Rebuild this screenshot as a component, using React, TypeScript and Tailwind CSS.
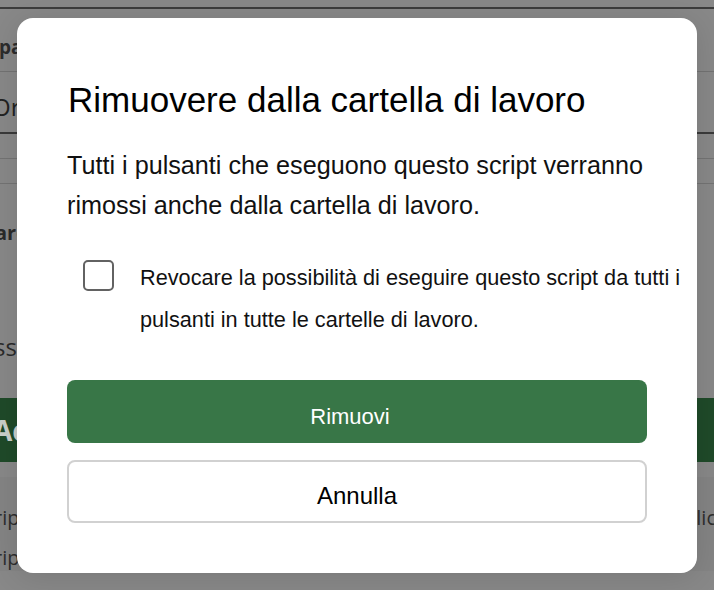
import React from 'react'

function PageBehind() {
  return (
    <div className="flex flex-col w-full font-['Open_Sans',sans-serif]">
      <div className="h-[7px]" />
      <div className="h-[2px] bg-[#3c3c3c]" />
      <div className="h-[62px] pt-[26px] pl-0 text-[19px] font-bold leading-[24px] text-[#2c2c2c] -ml-[1px]">pa</div>
      <div className="h-px bg-[#727272]" />
      <div className="h-[60px] pt-[20px] text-[24px] leading-[30px] text-[#222222] -ml-[8px]">Or</div>
      <div className="h-[2px] bg-[#3a3a3a]" />
      <div className="h-[24px]" />
      <div className="h-px bg-[#737373]" />
      <div className="h-[24px]" />
      <div className="h-px bg-[#737373]" />
      <div className="h-[214px] flex flex-col">
        <div className="mt-[36px] text-[20px] font-bold leading-[26px] text-[#2a2a2a] -ml-[5px]">are</div>
        <div className="mt-[86px] text-[24px] leading-[30px] text-[#2a2a2a] -ml-[6px]">ss</div>
      </div>
      <div className="h-[64px] bg-[#1f4a29] flex items-center">
        <span className="text-[28px] font-bold text-[#c9cfca] -ml-[7px]">Ac</span>
      </div>
      <div className="h-[15px]" />
      <div className="flex-1 bg-[#848484] h-[120px] flex flex-col">
        <div className="flex justify-between mt-[28px] text-[20px] leading-[26px] text-[#2e2e2e]">
          <span className="-ml-[6px]">rip</span>
          <span className="-mr-[2px]">lic</span>
        </div>
        <div className="mt-[14px] text-[20px] leading-[26px] text-[#2e2e2e] -ml-[6px]">rip</div>
      </div>
    </div>
  )
}

export default function App() {
  return (
    <div className="relative w-[714px] h-[590px] overflow-hidden bg-[#888888]">
      <PageBehind />
      <div className="absolute left-[17px] top-[18px] w-[680px] h-[555px] rounded-[16px] bg-white shadow-[0_4px_30px_rgba(0,0,0,0.12)] px-[50px] pt-[62px] font-['Liberation_Sans',Arial,sans-serif] text-black">
        <h2 className="text-[35px] leading-[40px] font-normal ml-[1px]">Rimuovere dalla cartella di lavoro</h2>
        <p className="mt-[25px] w-[600px] text-[25.2px] leading-[40px] text-[#111111]">
          Tutti i pulsanti che eseguono questo script verranno rimossi anche dalla cartella di lavoro.
        </p>
        <label className="mt-[32px] flex items-start">
          <span className="ml-[16px] mt-[3px] w-[31px] h-[31px] shrink-0 rounded-[5px] border-2 border-[#626262] bg-white" />
          <span className="ml-[26px] w-[560px] shrink-0 text-[21.7px] leading-[42px] text-[#111111]">
            Revocare la possibilità di eseguire questo script da tutti i pulsanti in tutte le cartelle di lavoro.
          </span>
        </label>
        <button className="mt-[39px] flex h-[63px] w-full items-center justify-center rounded-[8px] bg-[#387647] pt-[9px] pr-[14px] text-[22px] text-white">
          Rimuovi
        </button>
        <button className="mt-[17px] flex h-[63px] w-full items-center justify-center rounded-[8px] border-2 border-[#d1d1d1] bg-white pt-[9px] text-[24px] text-black">
          Annulla
        </button>
      </div>
    </div>
  )
}
